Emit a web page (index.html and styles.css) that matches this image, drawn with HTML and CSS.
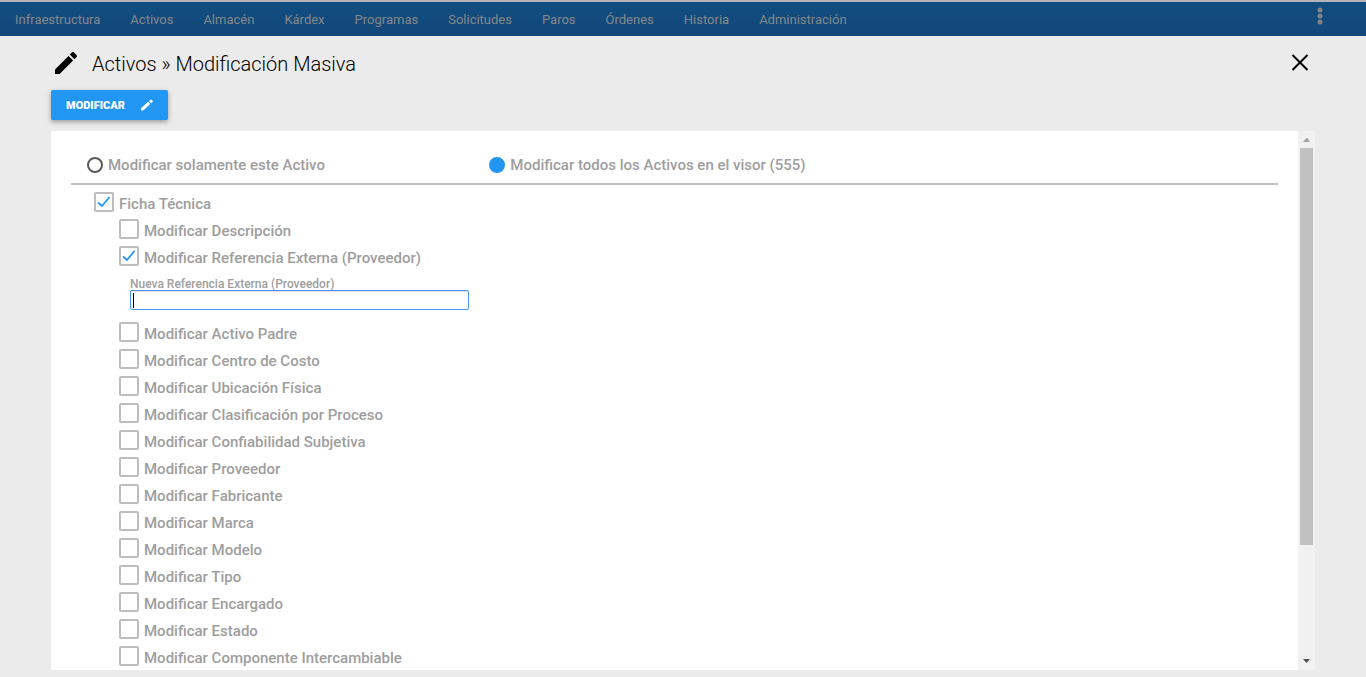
FILE: index.html
```html
<!DOCTYPE html>
<html lang="es">
<head>
<meta charset="utf-8">
<meta name="viewport" content="width=device-width, initial-scale=1">
<title>Activos » Modificación Masiva</title>
<link rel="stylesheet" href="styles.css">
</head>
<body>
<nav class="navbar">
  <div class="menu">
    <a href="#">Infraestructura</a>
    <a href="#">Activos</a>
    <a href="#">Almacén</a>
    <a href="#">Kárdex</a>
    <a href="#">Programas</a>
    <a href="#">Solicitudes</a>
    <a href="#">Paros</a>
    <a href="#">Órdenes</a>
    <a href="#">Historia</a>
    <a href="#">Administración</a>
  </div>
  <button class="more" type="button" aria-label="Más opciones">
    <svg width="6" height="18" viewBox="0 0 6 18" fill="currentColor"><circle cx="3" cy="3" r="2.5"/><circle cx="3" cy="9" r="2.5"/><circle cx="3" cy="15" r="2.5"/></svg>
  </button>
</nav>
<main class="dialog">
  <header class="dialog-header">
    <svg class="title-icon" viewBox="3 3 18 18" fill="currentColor"><path d="M3 17.25V21h3.75L17.81 9.94l-3.75-3.75L3 17.25zM20.71 7.04a1 1 0 0 0 0-1.41l-2.34-2.34a1 1 0 0 0-1.41 0l-1.83 1.83 3.75 3.75 1.83-1.83z"/></svg>
    <h1>Activos » Modificación Masiva</h1>
    <button class="close" type="button" aria-label="Cerrar">
      <svg width="18" height="18" viewBox="0 0 18 18" fill="none" stroke="currentColor" stroke-width="2"><path d="M1.5 1l15 15M16.5 1l-15 15"/></svg>
    </button>
  </header>
  <button class="submit" type="submit" form="bulk">
    <span>MODIFICAR</span>
    <svg width="12" height="12" viewBox="0 0 12 12" fill="currentColor"><path d="M0 9.300V11.500h2.200L9.300 5 7.200 2.800zM8 2.100l2.100 2.100L11.700 2.700a.7.7 0 0 0 0-.9L10.500.7a.7.7 0 0 0-.9 0z"/></svg>
  </button>
  <div class="panel">
    <form class="content" id="bulk">
      <div class="scope">
        <label class="radio"><input type="radio" name="scope"><span>Modificar solamente este Activo</span></label>
        <label class="radio"><input type="radio" name="scope" checked><span>Modificar todos los Activos en el visor (555)</span></label>
      </div>
      <div class="group">
        <label class="check"><input type="checkbox" checked><span>Ficha Técnica</span></label>
        <div class="options">
          <label class="check"><input type="checkbox"><span>Modificar Descripción</span></label>
          <label class="check"><input type="checkbox" checked><span>Modificar Referencia Externa (Proveedor)</span></label>
          <div class="field">
            <label for="ref">Nueva Referencia Externa (Proveedor)</label>
            <input id="ref" type="text">
          </div>
          <label class="check"><input type="checkbox"><span>Modificar Activo Padre</span></label>
          <label class="check"><input type="checkbox"><span>Modificar Centro de Costo</span></label>
          <label class="check"><input type="checkbox"><span>Modificar Ubicación Física</span></label>
          <label class="check"><input type="checkbox"><span>Modificar Clasificación por Proceso</span></label>
          <label class="check"><input type="checkbox"><span>Modificar Confiabilidad Subjetiva</span></label>
          <label class="check"><input type="checkbox"><span>Modificar Proveedor</span></label>
          <label class="check"><input type="checkbox"><span>Modificar Fabricante</span></label>
          <label class="check"><input type="checkbox"><span>Modificar Marca</span></label>
          <label class="check"><input type="checkbox"><span>Modificar Modelo</span></label>
          <label class="check"><input type="checkbox"><span>Modificar Tipo</span></label>
          <label class="check"><input type="checkbox"><span>Modificar Encargado</span></label>
          <label class="check"><input type="checkbox"><span>Modificar Estado</span></label>
          <label class="check"><input type="checkbox"><span>Modificar Componente Intercambiable</span></label>
        </div>
      </div>
    </form>
    <div class="scrollbar" aria-hidden="true">
      <svg class="arrow" viewBox="0 0 17 17" fill="#a3a3a3"><path d="M5 11l3.500-4h1L12 11z"/></svg>
      <div class="track"><div class="thumb"></div></div>
      <svg class="arrow" viewBox="0 0 17 17" fill="#505050"><path d="M5 6l3.500 4L12 6z"/></svg>
    </div>
  </div>
</main>
</body>
</html>
```
FILE: styles.css
```css
* { box-sizing: border-box; }

body {
  margin: 0;
  height: 100vh;
  display: flex;
  flex-direction: column;
  overflow: hidden;
  background: #ebebeb;
  font-family: Roboto, "Liberation Sans", sans-serif;
}

button {
  font: inherit;
  border: 0;
  padding: 0;
  background: none;
  cursor: pointer;
}

svg { display: block; }

.navbar {
  display: flex;
  justify-content: space-between;
  align-items: flex-start;
  height: 36px;
  flex: none;
  padding: 0 43px 0 15px;
  border-top: 2px solid #b4b4ba;
  background: linear-gradient(#114e80, #13477a);
}

.menu {
  display: flex;
  gap: 30px;
}

.menu a {
  color: #858789;
  font-size: 13px;
  font-weight: 400;
  line-height: 36px;
  text-decoration: none;
}

.more {
  margin-top: 5px;
  color: #858585;
}

.dialog {
  flex: 1;
  min-height: 0;
  display: flex;
  flex-direction: column;
  padding: 0 51px 7px;
}

.dialog-header {
  display: flex;
  align-items: center;
  flex: none;
  height: 54px;
  padding: 0 6px 0 4px;
}

.title-icon {
  width: 22px;
  height: 22px;
}

.dialog-header h1 {
  flex: 1;
  margin: 0 0 0 15px;
  padding-top: 2px;
  font-size: 20px;
  font-weight: 300;
  line-height: 26px;
}

.close { color: #000; }

.submit {
  align-self: flex-start;
  display: flex;
  align-items: center;
  gap: 16px;
  flex: none;
  height: 30px;
  padding: 0 15px;
  border-radius: 2px;
  background: #2196f3;
  box-shadow: 0 2px 5px rgba(0, 0, 0, 0.35);
  color: #fff;
  font-size: 11px;
  font-weight: 900;
}

.panel {
  display: flex;
  flex: 1;
  min-height: 0;
  margin-top: 11px;
  background: #fff;
}

.content {
  flex: 1;
  overflow: hidden;
  padding: 15px 20px 0;
  color: #9e9e9e;
  font-size: 15px;
  font-weight: 500;
}

.scope {
  display: grid;
  grid-template-columns: repeat(3, 1fr);
  padding: 8px 0 7px;
  border-bottom: 2px solid #c4c0c0;
}

.radio {
  display: flex;
  align-items: center;
  gap: 5px;
  padding-left: 16px;
  line-height: 22px;
}

.radio input {
  appearance: none;
  width: 16px;
  height: 16px;
  margin: 0;
  border: 2px solid #5a5a5a;
  border-radius: 50%;
}

.radio input:checked {
  border-color: #2196f3;
  background: #2196f3;
}

.group { padding: 7px 0 0 23px; }

.options { padding-left: 25px; }

.check {
  display: flex;
  align-items: flex-start;
  gap: 5px;
  height: 27px;
  line-height: 24px;
}

.check input {
  appearance: none;
  width: 20px;
  height: 20px;
  margin: 0;
  border: 2px solid #bdbdbd;
  border-radius: 2px;
}

.check input:checked {
  background: url("data:image/svg+xml,%3Csvg xmlns='http://www.w3.org/2000/svg' viewBox='0 0 16 16'%3E%3Cpath d='M2 8.500L6 12 13.500 3' fill='none' stroke='%232196f3' stroke-width='1.800'/%3E%3C/svg%3E") center / 16px 16px no-repeat;
}

.field {
  display: flex;
  flex-direction: column;
  padding: 5px 0 12px 11px;
}

.field label {
  font-size: 12px;
  line-height: 12px;
}

.field input {
  width: 339px;
  max-width: 100%;
  height: 20px;
  padding: 0 3px;
  border: 1px solid #4d90fe;
  border-radius: 2px;
  outline: 0;
  background: linear-gradient(#000, #000) 2px center / 1px 15px no-repeat #fff;
  box-shadow: inset 0 1px 1px #ddd;
}

.scrollbar {
  display: flex;
  flex-direction: column;
  flex: none;
  width: 17px;
  background: #f1f1f1;
}

.arrow {
  width: 17px;
  height: 17px;
}

.track {
  flex: 1;
  padding: 0 2px;
}

.thumb {
  height: 78.6%;
  background: #c1c1c1;
}
```
